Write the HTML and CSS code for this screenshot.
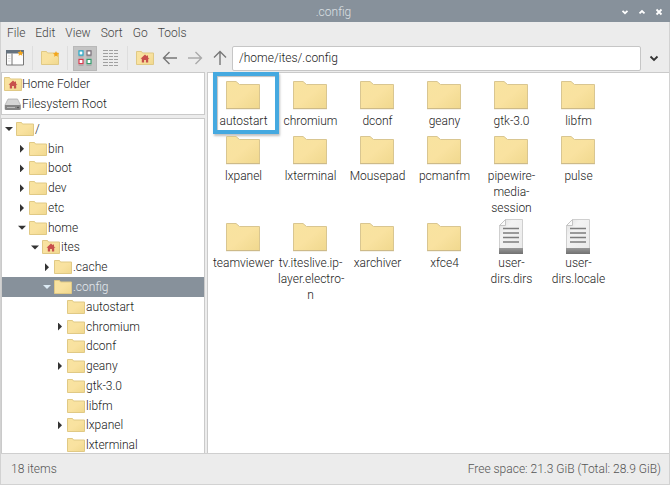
FILE: index.html
```html
<!DOCTYPE html>
<html lang="en">
<head>
<meta charset="utf-8">
<title>.config</title>
<link rel="stylesheet" href="styles.css">
</head>
<body>
<svg class="sprite" aria-hidden="true">
  <defs>
    <linearGradient id="fill-folder" x1="0" y1="0" x2="1" y2="1">
      <stop offset="0" stop-color="#f8e3a0"/><stop offset=".5" stop-color="#f9e2a0"/><stop offset="1" stop-color="#f0d88e"/>
    </linearGradient>
    <linearGradient id="fill-page" x1="0" y1="0" x2="1" y2="1">
      <stop offset="0" stop-color="#dcdcdc"/><stop offset=".3" stop-color="#f3f3f3"/><stop offset="1" stop-color="#e9e9e9"/>
    </linearGradient>
    <linearGradient id="fill-base" x1="0" y1="0" x2="0" y2="1">
      <stop offset="0" stop-color="#999"/><stop offset="1" stop-color="#707070"/>
    </linearGradient>
    <symbol id="folder-big" viewBox="0 0 36 36">
      <path d="M1.500 31.500v-27h9.500l3.500 3h20v24z" fill="url(#fill-folder)" stroke="#d9c691"/>
      <path d="M1 31.700h34" stroke="#cbb888"/>
    </symbol>
    <symbol id="file-big" viewBox="0 0 36 36">
      <path d="M6.500 34.500v-28l6-6h17v34z" fill="url(#fill-page)" stroke="#cfcfcf"/>
      <path d="M6.500 6.500h6v-6z" fill="#fafafa" stroke="#c4c4c4"/>
      <path d="M6 29h24v6h-24z" fill="url(#fill-base)"/>
      <path d="M10 9.500h16M10 14h16M10 18.500h16M10 23h16" stroke="#7d7d7d" stroke-width="1.300"/>
    </symbol>
    <symbol id="folder" viewBox="0 0 18 16">
      <path d="M.5 14.500v-13h5l1 1.500h11v11.500z" fill="url(#fill-folder)" stroke="#e0c985"/>
    </symbol>
    <symbol id="house" viewBox="0 0 18 16">
      <path d="M9 4.500l-4.500 4.300h1.300v3.700h2.300v-2.500h1.800v2.500h2.300v-3.700h1.300l-1.500-1.400v-2h-1.200v.8z" fill="#c8504c"/>
    </symbol>
    <symbol id="home" viewBox="0 0 18 16"><use href="#folder"/><use href="#house"/></symbol>
    <symbol id="drive" viewBox="0 0 18 16">
      <path d="M4 3h9.500l3 6v4.500h-15.500v-4.500z" fill="#d5d5d5" stroke="#aaa" stroke-width=".7"/>
      <path d="M1 9h15.500v3.500q0 1.500-1.500 1.500h-12.500q-1.500 0-1.500-1.500z" fill="#858585"/>
      <path d="M3 11.500h8" stroke="#bbb"/><circle cx="14" cy="11.500" r=".8" fill="#444"/>
    </symbol>
    <symbol id="star" viewBox="0 0 6 6"><path d="M3 0l.9 1.900 2.100.3-1.500 1.500.4 2.100-1.900-1-1.900 1 .4-2.100-1.500-1.500 2.100-.3z" fill="#f2a51d"/></symbol>
  </defs>
</svg>
<div class="window">
  <header class="titlebar">
    <h1>.config</h1>
    <div class="controls">
      <button type="button" aria-label="Minimise"><svg viewBox="0 0 8 8"><path d="M1.500 2.800l2.500 2.400 2.500-2.400"/></svg></button>
      <button type="button" aria-label="Maximise"><svg viewBox="0 0 8 8"><path d="M1.500 5.400l2.500-2.400 2.500 2.400"/></svg></button>
      <button type="button" aria-label="Close"><svg viewBox="0 0 8 8"><path d="M1.500 1.500l5 5M6.500 1.500l-5 5"/></svg></button>
    </div>
  </header>
  <nav class="menubar" aria-label="Menu">
    <button type="button">File</button><button type="button">Edit</button><button type="button">View</button><button type="button">Sort</button><button type="button">Go</button><button type="button">Tools</button>
  </nav>
  <div class="toolbar">
    <button type="button" aria-label="New window"><svg class="icon" viewBox="0 0 18 16"><path d="M.5.5h17v14.500h-17z" fill="#fdfdfd" stroke="#777"/><path d="M0 0h18v3.500h-18z" fill="#66737f"/><path d="M6 3.500v11.500" stroke="#777"/><path d="M2 6h2.500M2 8.500h2.500M2 11h2.500" stroke="#ddd"/><use href="#star" x="11.500" y="0" width="6" height="6"/></svg></button>
    <span class="sep"></span>
    <button type="button" aria-label="New folder"><svg class="icon" viewBox="0 0 18 16"><use href="#folder"/><use href="#star" x="12" y="1" width="6" height="6"/></svg></button>
    <span class="sep"></span>
    <div class="views">
      <button type="button" class="active" aria-label="Icon view" aria-pressed="true"><svg class="icon" viewBox="0 0 18 16"><g fill="#fff"><path d="M3 1h4v4h-4zM11 1h4v4h-4zM3 9.500h4v4h-4zM11 9.500h4v4h-4z"/></g><g fill="none" stroke-width="1.200"><path d="M3 .8h4v4.400h-4z" stroke="#25a6c6"/><path d="M11 .8h4v4.400h-4z" stroke="#786e78"/><path d="M3 9.300h4v4.400h-4z" stroke="#d83d50"/><path d="M11 9.300h4v4.400h-4z" stroke="#369d6e"/></g><path d="M2.500 6.800h5M10.500 6.800h5M2.500 15.300h5M10.500 15.300h5" stroke="#a0a0a0" stroke-width=".8"/></svg></button>
      <button type="button" aria-label="List view" aria-pressed="false"><svg class="icon" viewBox="0 0 18 16"><path d="M2 .5h5M8 .5h4M13 .5h4M2 3.500h5M8 3.500h4M13 3.500h4M2 6.500h5M8 6.500h4M13 6.500h4M2 9.500h5M8 9.500h4M13 9.500h4M2 12.500h5M8 12.500h4M13 12.500h4M2 15.500h5M8 15.500h4M13 15.500h4" stroke="#a0a0a0"/></svg></button>
    </div>
    <span class="sep"></span>
    <div class="views">
      <button type="button" aria-label="Home"><svg class="icon"><use href="#home"/></svg></button>
      <button type="button" aria-label="Back"><svg class="icon arrow" viewBox="0 0 18 16"><path d="M16 8h-13.500M8.500 2l-6 6 6 6"/></svg></button>
      <button type="button" aria-label="Forward" disabled><svg class="icon arrow" viewBox="0 0 18 16"><path d="M2 8h13.500M9.500 2l6 6-6 6"/></svg></button>
      <button type="button" aria-label="Up"><svg class="icon arrow" viewBox="0 0 18 16"><path d="M9 15v-13.500M3 7.500l6-6 6 6"/></svg></button>
    </div>
    <input class="path" type="text" aria-label="Location" value="/home/ites/.config">
    <button type="button" class="drop" aria-label="Show history"><svg viewBox="0 0 10 10"><path d="M1.500 3.500l3.500 3.500 3.500-3.500"/></svg></button>
  </div>
  <div class="body">
    <aside class="side">
      <ul class="places">
        <li><svg class="icon"><use href="#home"/></svg>Home Folder</li>
        <li><svg class="icon"><use href="#drive"/></svg>Filesystem Root</li>
      </ul>
      <ul class="tree">
        <li><i class="open"></i><svg class="icon"><use href="#folder"/></svg>/</li>
        <li class="l1"><i class="shut"></i><svg class="icon"><use href="#folder"/></svg>bin</li>
        <li class="l1"><i class="shut"></i><svg class="icon"><use href="#folder"/></svg>boot</li>
        <li class="l1"><i class="shut"></i><svg class="icon"><use href="#folder"/></svg>dev</li>
        <li class="l1"><i class="shut"></i><svg class="icon"><use href="#folder"/></svg>etc</li>
        <li class="l1"><i class="open"></i><svg class="icon"><use href="#folder"/></svg>home</li>
        <li class="l2"><i class="open"></i><svg class="icon"><use href="#home"/></svg>ites</li>
        <li class="l3"><i class="shut"></i><svg class="icon"><use href="#folder"/></svg>.cache</li>
        <li class="l3 selected"><i class="open"></i><svg class="icon"><use href="#folder"/></svg>.config</li>
        <li class="l4"><i></i><svg class="icon"><use href="#folder"/></svg>autostart</li>
        <li class="l4"><i class="shut"></i><svg class="icon"><use href="#folder"/></svg>chromium</li>
        <li class="l4"><i></i><svg class="icon"><use href="#folder"/></svg>dconf</li>
        <li class="l4"><i class="shut"></i><svg class="icon"><use href="#folder"/></svg>geany</li>
        <li class="l4"><i></i><svg class="icon"><use href="#folder"/></svg>gtk-3.0</li>
        <li class="l4"><i></i><svg class="icon"><use href="#folder"/></svg>libfm</li>
        <li class="l4"><i class="shut"></i><svg class="icon"><use href="#folder"/></svg>lxpanel</li>
        <li class="l4"><i></i><svg class="icon"><use href="#folder"/></svg>lxterminal</li>
      </ul>
    </aside>
    <main class="files">
      <ul>
        <li class="marked"><svg><use href="#folder-big"/></svg><span>autostart</span></li>
        <li><svg><use href="#folder-big"/></svg><span>chromium</span></li>
        <li><svg><use href="#folder-big"/></svg><span>dconf</span></li>
        <li><svg><use href="#folder-big"/></svg><span>geany</span></li>
        <li><svg><use href="#folder-big"/></svg><span>gtk-3.0</span></li>
        <li><svg><use href="#folder-big"/></svg><span>libfm</span></li>
        <li><svg><use href="#folder-big"/></svg><span>lxpanel</span></li>
        <li><svg><use href="#folder-big"/></svg><span>lxterminal</span></li>
        <li><svg><use href="#folder-big"/></svg><span>Mousepad</span></li>
        <li><svg><use href="#folder-big"/></svg><span>pcmanfm</span></li>
        <li><svg><use href="#folder-big"/></svg><span>pipewire-media-session</span></li>
        <li><svg><use href="#folder-big"/></svg><span>pulse</span></li>
        <li><svg><use href="#folder-big"/></svg><span>teamviewer</span></li>
        <li><svg><use href="#folder-big"/></svg><span>tv.iteslive.ip&shy;layer.electro&shy;n</span></li>
        <li><svg><use href="#folder-big"/></svg><span>xarchiver</span></li>
        <li><svg><use href="#folder-big"/></svg><span>xfce4</span></li>
        <li><svg><use href="#file-big"/></svg><span>user-dirs.dirs</span></li>
        <li><svg><use href="#file-big"/></svg><span>user-dirs.locale</span></li>
      </ul>
    </main>
  </div>
  <footer class="status"><span>18 items</span><span>Free space: 21.3 GiB (Total: 28.9 GiB)</span></footer>
</div>
</body>
</html>
```
FILE: styles.css
```css
* { box-sizing: border-box; }
body { margin: 0; font: 300 12px/16px Roboto, "Liberation Sans", sans-serif; color: #222; }
ul { list-style: none; margin: 0; padding: 0; }
button { border: 0; padding: 0; background: none; font: inherit; color: inherit; display: flex; align-items: center; justify-content: center; }
.sprite { position: absolute; width: 0; height: 0; }
.icon { width: 18px; height: 16px; flex: none; }

.window { display: flex; flex-direction: column; min-height: 100vh; background: #ececec; border: 1px solid #d2d2d2; border-top: 0; }

.titlebar { display: grid; grid-template-columns: 1fr auto 1fr; align-items: center; height: 22px; margin: 0 -1px; padding: 2px 3px 0 0; background: #87919b; color: #dce0e4; }
.titlebar h1 { grid-column: 2; margin: 0; font: inherit; }
.controls { display: flex; justify-content: flex-end; gap: 1px; }
.controls button { width: 16px; height: 16px; }
.controls svg { width: 8px; height: 8px; fill: none; stroke: #fff; stroke-width: 1.8; }

.menubar { display: flex; align-items: center; gap: 10px; padding: 0 6px; height: 22px; color: #444; }

.toolbar { display: flex; align-items: center; height: 28px; padding: 0 2px; }
.toolbar button { width: 24px; height: 25px; flex: none; }
.toolbar .active { background: #c4c4c4; border: 1px solid #b8b8b8; }
.views { display: flex; gap: 1px; }
.sep { width: 1px; height: 24px; margin: 0 5px; background: #dedede; }
.arrow { fill: none; stroke: #777; stroke-width: 1.4; }
button:disabled .arrow { stroke: #aaa; }
.path { flex: 1; min-width: 0; height: 25px; padding: 0 6px; border: 1px solid #c6c6c6; border-radius: 2px; background: #fff; font: inherit; color: #222; }
.toolbar .drop { width: 26px; }
.drop svg { width: 10px; height: 10px; fill: none; stroke: #333; stroke-width: 1.8; }

.body { flex: 1; display: grid; grid-template-columns: 204px 1fr; gap: 2px; border-bottom: 1px solid #cfcfcf; }
.side { display: flex; flex-direction: column; gap: 3px; overflow: hidden; }
.places, .tree { background: #fff; border: 1px solid #cacaca; }
.tree { flex: 1; display: flex; flex-direction: column; margin-bottom: -2px; border-bottom: 0; }
.places li, .tree li { display: flex; align-items: center; }
.places li { height: 20px; padding-left: 2px; }
.places { height: 43px; padding-top: 1px; }
.tree li { flex: 1; padding-left: 1px; }
.tree .l1 { padding-left: 14px; }
.tree .l2 { padding-left: 27px; }
.tree .l3 { padding-left: 39px; }
.tree .l4 { padding-left: 52px; }
.tree .icon { margin-right: 1px; }
.tree .selected { background: #87919b; color: #e6eaee; }
.tree i { width: 13px; height: 8px; flex: none; background: #333; clip-path: polygon(0 0, 0 0, 0 0); }
.tree .open { clip-path: polygon(2px 2px, 10px 2px, 6px 6px); }
.tree .shut { clip-path: polygon(4px 0, 8px 4px, 4px 8px); }
.tree .selected .open { background: #dceaf4; }

.files { background: #fff; border: 1px solid #cacaca; border-width: 1px 0 0 1px; padding: 4px 0 0 2px; }
.files ul { display: grid; grid-template-columns: repeat(auto-fill, 67px); row-gap: 3px; }
.files li { position: relative; display: flex; flex-direction: column; align-items: center; padding: 0 1px; text-align: center; }
.files svg { width: 36px; height: 36px; margin-right: 2px; }
.files span { max-width: 100%; }
.marked::after { content: ""; position: absolute; inset: -5px -2px -5px 3px; border: 4px solid #45a9e0; box-shadow: 1px 2px 2px #8888, inset 1px 1px 1px #8888; }

.status { display: flex; justify-content: space-between; align-items: center; height: 30px; padding: 0 8px 0 10px; color: #555; }
```
